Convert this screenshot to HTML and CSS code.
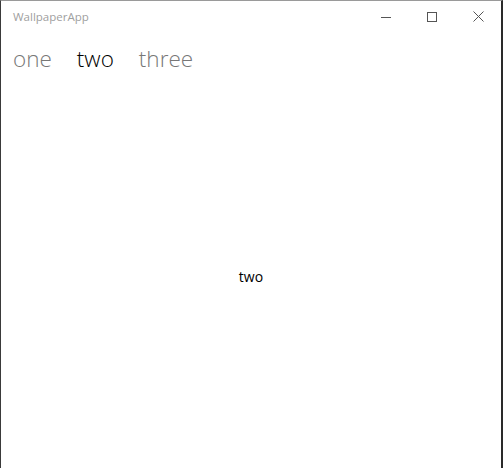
FILE: index.html
```html
<!DOCTYPE html>
<html>
<head>
<meta charset="utf-8">
<link rel="stylesheet" href="styles.css">
</head>
<body>
<div class="window">
  <div class="titlebar">
    <span class="title">WallpaperApp</span>
    <div class="controls">
      <span class="ctl"><svg width="10" height="10" viewBox="0 0 10 10"><line x1="0" y1="5.5" x2="10" y2="5.5" stroke="#555" stroke-width="1"/></svg></span>
      <span class="ctl"><svg width="10" height="10" viewBox="0 0 10 10"><rect x="0.5" y="0.5" width="9" height="9" fill="none" stroke="#555" stroke-width="1"/></svg></span>
      <span class="ctl"><svg width="11" height="11" viewBox="0 0 11 11"><path d="M0.5 0.5 L10.5 10.5 M10.5 0.5 L0.5 10.5" stroke="#555" stroke-width="1"/></svg></span>
    </div>
  </div>
  <div class="pivot">
    <span class="tab">one</span>
    <span class="tab active">two</span>
    <span class="tab">three</span>
  </div>
  <div class="content">two</div>
</div>
</body>
</html>
```
FILE: styles.css
```css
html, body {
  margin: 0;
  padding: 0;
  background: #fff;
}
.window {
  box-sizing: border-box;
  width: 503px;
  height: 468px;
  border-top: 1px solid #9a9a9a;
  border-left: 1px solid #3a3a3a;
  border-right: 2px solid #2a2a2a;
  display: flex;
  flex-direction: column;
  background: #fff;
}
.titlebar {
  height: 31px;
  display: flex;
  align-items: center;
  justify-content: space-between;
}
.title {
  margin-left: 12px;
  font-family: "Open Sans", "Noto Sans", sans-serif;
  font-size: 11.5px;
  color: #a0a0a0;
}
.controls {
  display: flex;
  height: 100%;
}
.ctl {
  width: 46px;
  display: flex;
  align-items: center;
  justify-content: center;
}
.pivot {
  display: flex;
  gap: 25px;
  padding-left: 12px;
  height: 52px;
  align-items: center;
}
.tab {
  font-family: "Open Sans", "Noto Sans", sans-serif;
  font-weight: 300;
  font-size: 22.5px;
  color: #777;
}
.tab.active {
  color: #000;
}
.content {
  flex: 1;
  display: flex;
  align-items: center;
  justify-content: center;
  font-family: "Open Sans", "Noto Sans", sans-serif;
  font-size: 14px;
  color: #000;
}
```
